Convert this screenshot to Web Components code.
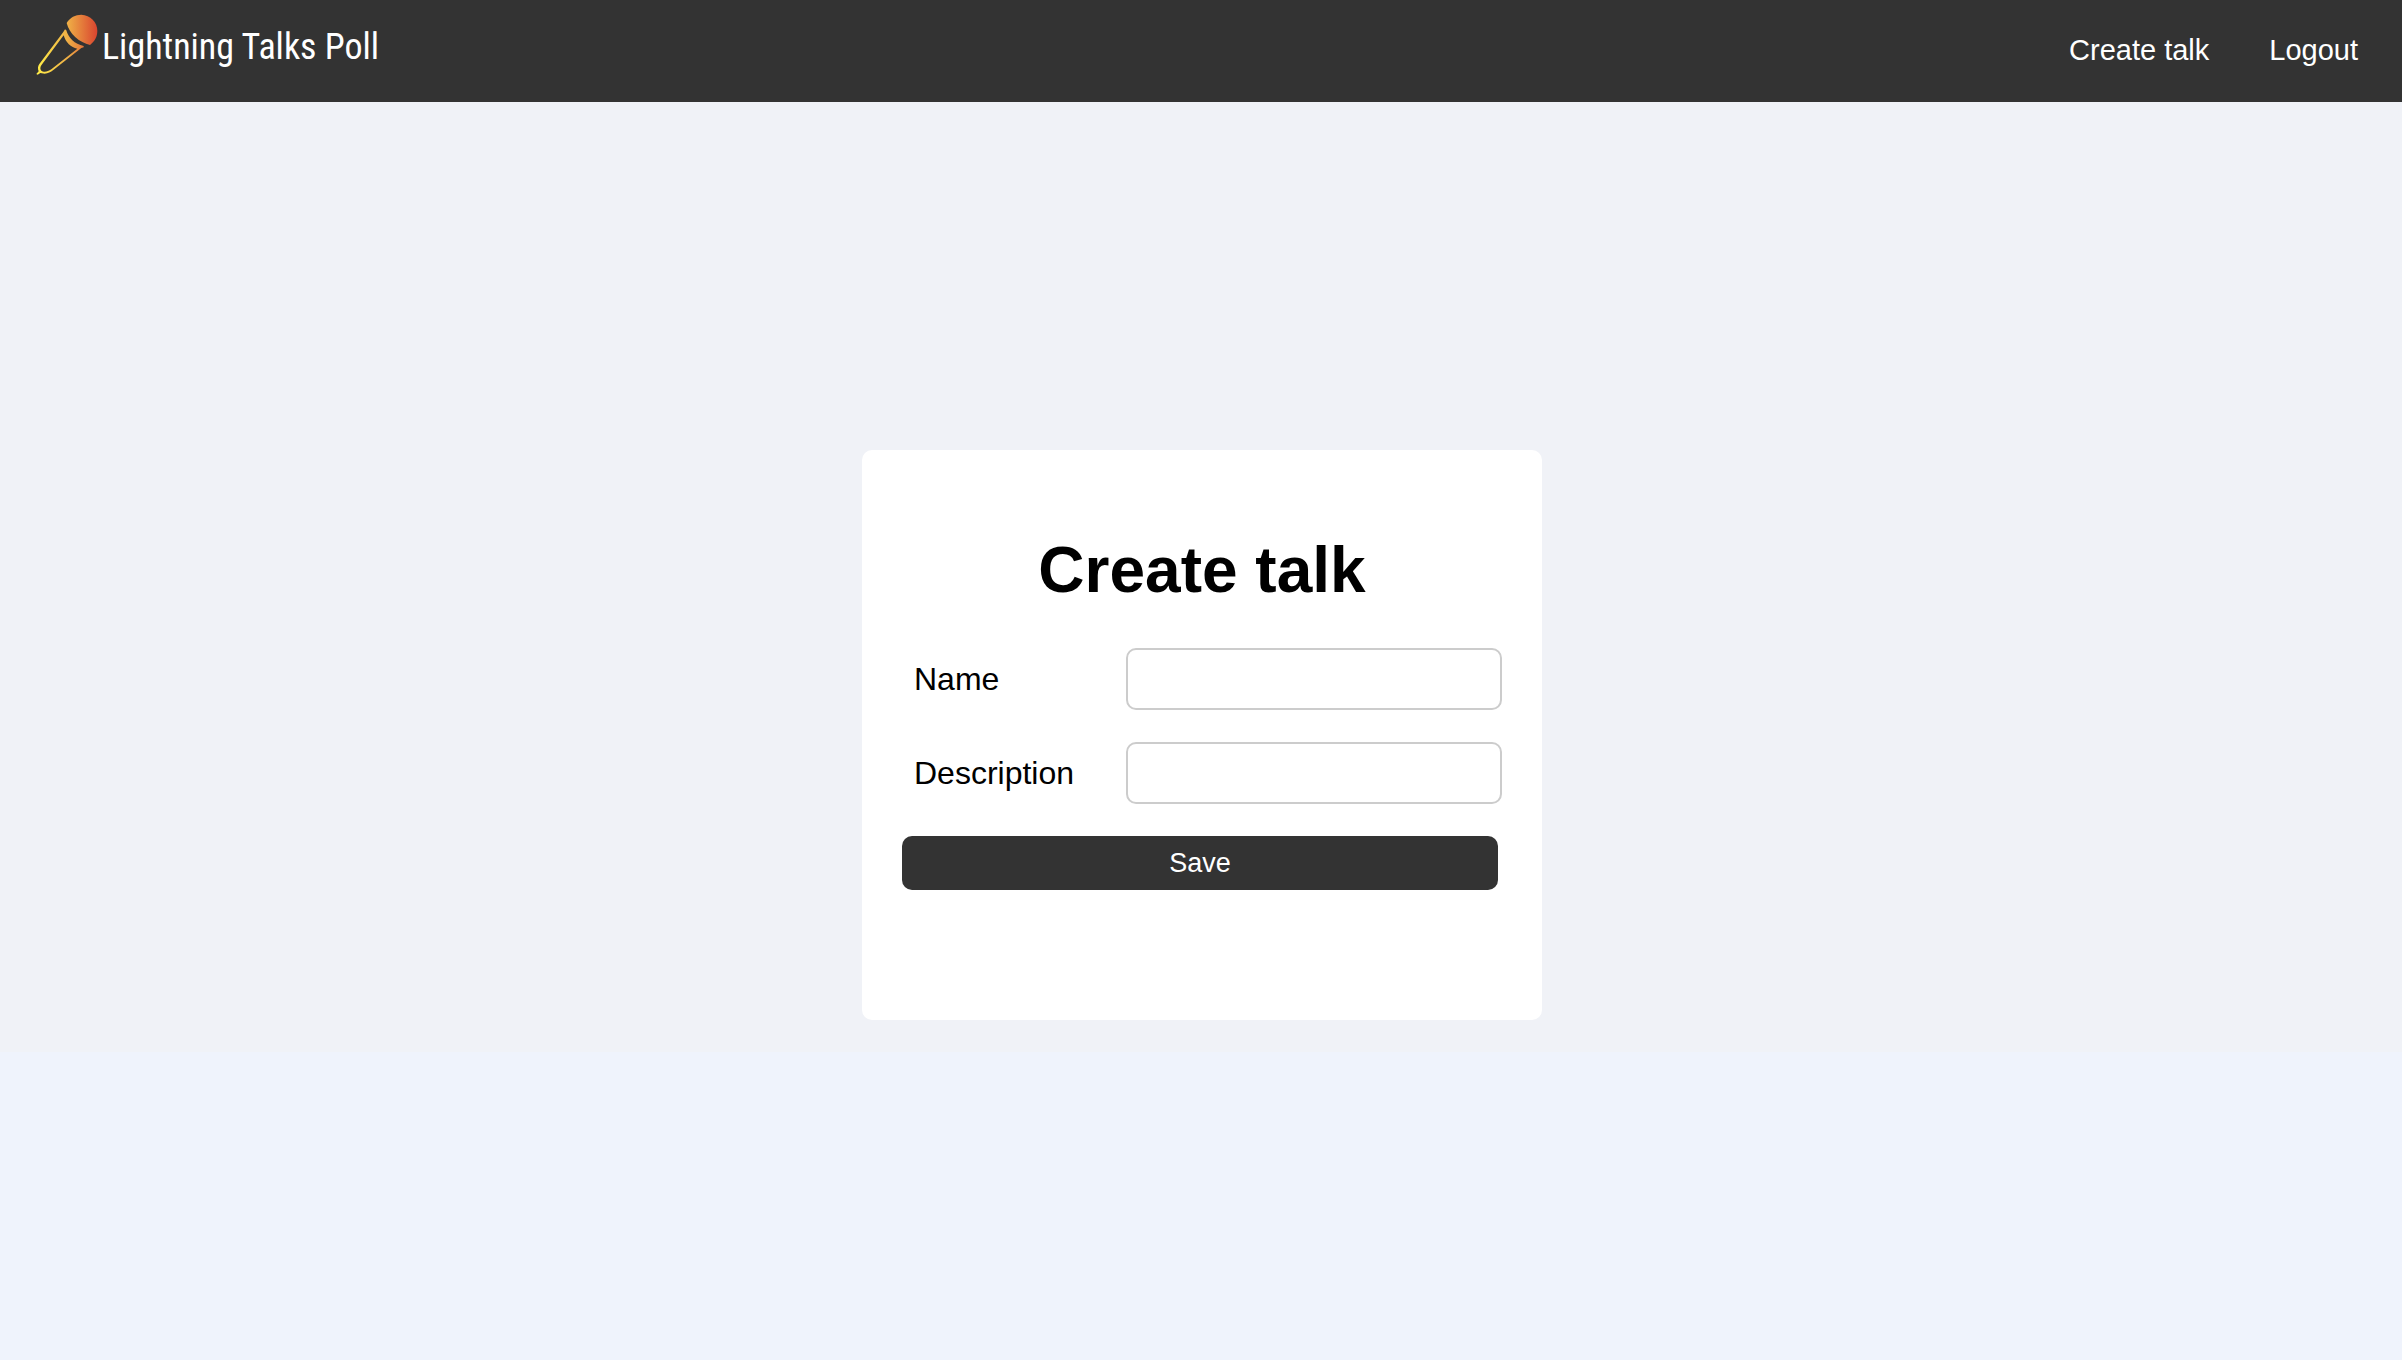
<!DOCTYPE html>
<html lang="en">
<head>
<meta charset="utf-8">
<title>Lightning Talks Poll</title>
<style>
  body { margin: 0; min-height: 100vh; background: #eff3fc; font-family: "Liberation Sans", Arial, sans-serif; color: #000; }
</style>
</head>
<body>
<app-header>
  <app-logo slot="brand">Lightning Talks Poll</app-logo>
  <nav-link href="#create">Create talk</nav-link>
  <nav-link href="#logout">Logout</nav-link>
</app-header>
<app-page>
  <form-card heading="Create talk">
    <form-field name="name" label="Name"></form-field>
    <form-field name="description" label="Description"></form-field>
    <save-button>Save</save-button>
  </form-card>
</app-page>
<script>
  const define = (tag, render) => customElements.define(tag, class extends HTMLElement {
    connectedCallback() {
      if (this.shadowRoot) return;
      this.attachShadow({ mode: "open" }).innerHTML = render(this);
    }
  });

  define("app-header", () => `
    <style>
      :host { display: block; background: #333; color: #fff; }
      header { display: flex; justify-content: space-between; align-items: flex-start; padding: 13px 44px 15px 35px; }
      nav { display: flex; gap: 60px; line-height: 74px; }
    </style>
    <header><slot name="brand"></slot><nav><slot></slot></nav></header>`);

  define("app-logo", () => `
    <style>
      :host { display: block; }
      a { display: flex; align-items: flex-start; gap: 3px; color: inherit; text-decoration: none;
          font: 400 36px/68px "Roboto Condensed", "Liberation Sans Narrow", Roboto, sans-serif; }
      svg { display: block; width: 64px; height: 64px; }
    </style>
    <a href="#home">
      <svg viewBox="45 40 192 192" aria-hidden="true">
        <defs>
          <linearGradient id="g" gradientUnits="userSpaceOnUse" x1="50" y1="0" x2="233" y2="0">
            <stop offset="0" stop-color="#ffee48"/><stop offset=".5" stop-color="#efb046"/><stop offset="1" stop-color="#d9432f"/>
          </linearGradient>
        </defs>
        <g fill="url(#g)">
          <path d="M140 70C150 53 166 45 184 45C211 46 232 67 232 94C232 111 224 125 210 136C179 129 148 103 140 70Z"/>
          <path fill-rule="evenodd" d="M135 89L139 92C145 114 164 134 191 139L191 143L184 145L100 211C92 217 84 222 74 222L61 220L53 225L49 223L56 215C53 207 53 200 58 193L130 97ZM131 107L64 197C60 203 60 209 64 213C70 218 82 218 94 209L172 147C153 144 137 128 131 107Z"/>
        </g>
      </svg>
      <span><slot></slot></span>
    </a>`);

  define("nav-link", el => `
    <style>
      :host { display: block; font-size: 29px; }
      a { color: inherit; text-decoration: none; }
    </style>
    <a href="${el.getAttribute("href")}"><slot></slot></a>`);

  define("app-page", () => `
    <style>
      :host { display: block; background: #f0f2f7; }
      main { display: flex; justify-content: center; padding: 348px 30px 32px 32px; }
    </style>
    <main><slot></slot></main>`);

  define("form-card", el => `
    <style>
      :host { display: block; box-sizing: border-box; width: 100%; max-width: 680px; padding: 83px 40px 130px; border-radius: 10px; background: #fff; }
      h1 { margin: 0 0 41px; font-size: 64px; line-height: 74px; text-align: center; }
      form { display: flex; flex-direction: column; gap: 32px; }
    </style>
    <h1>${el.getAttribute("heading")}</h1>
    <form><slot></slot></form>`);

  define("form-field", el => `
    <style>
      :host { display: grid; grid-template-columns: 224px 1fr; align-items: center; font-size: 32px; line-height: 38px; }
      label { padding-left: 12px; }
      input { box-sizing: border-box; width: 100%; height: 62px; padding: 10px 16px; border: 2px solid #ccc; border-radius: 10px;
              background: #fff; font: inherit; color: inherit; }
    </style>
    <label for="field">${el.getAttribute("label")}</label>
    <input id="field" type="text" name="${el.getAttribute("name")}">`);

  define("save-button", () => `
    <style>
      :host { display: block; padding-right: 4px; }
      button { display: block; width: 100%; padding: 12px; border: 0; border-radius: 10px; background: #333; color: #fff;
               font: 27px/30px "Liberation Sans", Arial, sans-serif; cursor: pointer; }
    </style>
    <button type="submit"><slot></slot></button>`);
</script>
</body>
</html>
